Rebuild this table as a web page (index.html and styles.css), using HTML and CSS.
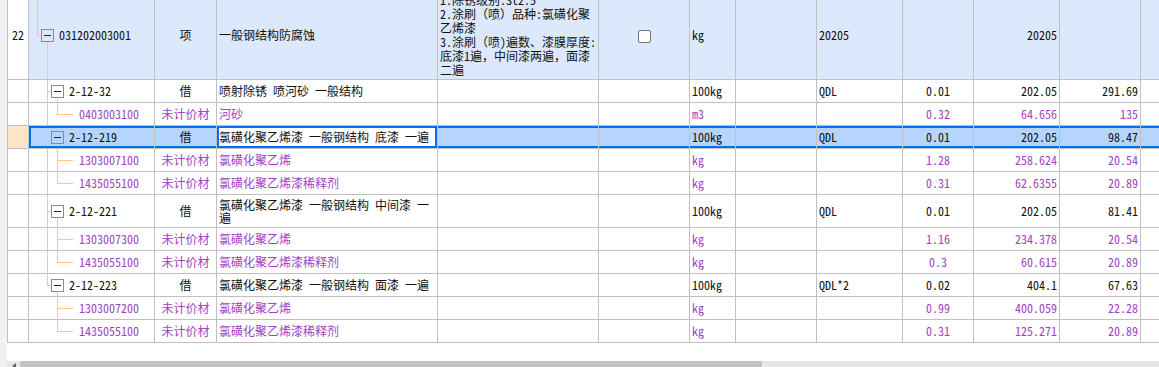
FILE: index.html
```html
<!DOCTYPE html>
<html lang="zh-CN">
<head>
<meta charset="utf-8">
<title>清单</title>
<link rel="stylesheet" href="styles.css">
</head>
<body>
<div class="frame">
  <div class="gutter"></div>
  <div class="main">
    <div class="grid-wrap">
      <table class="grid">
        <colgroup>
          <col class="c-no"><col class="c-code"><col class="c-type"><col class="c-name"><col class="c-feat"><col class="c-chk"><col class="c-unit"><col class="c-e1"><col class="c-expr"><col class="c-qty"><col class="c-price"><col class="c-sum"><col class="c-last">
        </colgroup>
        <tbody>
          <tr class="r-top">
            <td class="no">22</td>
            <td class="tree lv1"><span class="ln v x0 up"></span><span class="ln h h0"></span><span class="ln v x1 down"></span><span class="tog"></span><span>031202003001</span></td>
            <td class="ctr">项</td>
            <td>一般钢结构防腐蚀</td>
            <td class="wrap">1.除锈级别:St2.5<br>2.涂刷（喷）品种:氯磺化聚乙烯漆<br>3.涂刷（喷)遍数、漆膜厚度:底漆1遍，中间漆两遍，面漆二遍</td>
            <td class="ctr"><span class="chk"></span></td>
            <td>kg</td>
            <td></td>
            <td>20205</td>
            <td></td>
            <td class="num">20205</td>
            <td></td>
            <td></td>
          </tr>
          <tr class="r">
            <td class="no"></td>
            <td class="tree lv2"><span class="ln v x1 full"></span><span class="ln h h1"></span><span class="ln v x2 down"></span><span class="tog"></span><span>2-12-32</span></td>
            <td class="ctr">借</td>
            <td>喷射除锈 喷河砂 一般结构</td>
            <td></td><td></td>
            <td>100kg</td><td></td><td>QDL</td>
            <td class="ctr">0.01</td><td class="num">202.05</td><td class="num">291.69</td><td></td>
          </tr>
          <tr class="r p">
            <td class="no"></td>
            <td class="tree lv3"><span class="ln v x1 full"></span><span class="ln v x2 up"></span><span class="ln h h2"></span><span>0403003100</span></td>
            <td class="ctr">未计价材</td>
            <td>河砂</td>
            <td></td><td></td>
            <td>m3</td><td></td><td></td>
            <td class="ctr">0.32</td><td class="num">64.656</td><td class="num">135</td><td></td>
          </tr>
          <tr class="r sel">
            <td class="no"></td>
            <td class="tree lv2"><span class="tog"></span><span>2-12-219</span></td>
            <td class="ctr">借</td>
            <td class="act">氯磺化聚乙烯漆 一般钢结构 底漆 一遍</td>
            <td></td><td></td>
            <td>100kg</td><td></td><td>QDL</td>
            <td class="ctr">0.01</td><td class="num">202.05</td><td class="num">98.47</td><td class="end"></td>
          </tr>
          <tr class="r p">
            <td class="no"></td>
            <td class="tree lv3"><span class="ln v x1 full"></span><span class="ln v x2 full"></span><span class="ln h h2"></span><span>1303007100</span></td>
            <td class="ctr">未计价材</td>
            <td>氯磺化聚乙烯</td>
            <td></td><td></td>
            <td>kg</td><td></td><td></td>
            <td class="ctr">1.28</td><td class="num">258.624</td><td class="num">20.54</td><td></td>
          </tr>
          <tr class="r p">
            <td class="no"></td>
            <td class="tree lv3"><span class="ln v x1 full"></span><span class="ln v x2 up"></span><span class="ln h h2"></span><span>1435055100</span></td>
            <td class="ctr">未计价材</td>
            <td>氯磺化聚乙烯漆稀释剂</td>
            <td></td><td></td>
            <td>kg</td><td></td><td></td>
            <td class="ctr">0.31</td><td class="num">62.6355</td><td class="num">20.89</td><td></td>
          </tr>
          <tr class="r tall">
            <td class="no"></td>
            <td class="tree lv2"><span class="ln v x1 full"></span><span class="ln h h1"></span><span class="ln v x2 down"></span><span class="tog"></span><span>2-12-221</span></td>
            <td class="ctr">借</td>
            <td class="wrap">氯磺化聚乙烯漆 一般钢结构 中间漆 一遍</td>
            <td></td><td></td>
            <td>100kg</td><td></td><td>QDL</td>
            <td class="ctr">0.01</td><td class="num">202.05</td><td class="num">81.41</td><td></td>
          </tr>
          <tr class="r p">
            <td class="no"></td>
            <td class="tree lv3"><span class="ln v x1 full"></span><span class="ln v x2 full"></span><span class="ln h h2"></span><span>1303007300</span></td>
            <td class="ctr">未计价材</td>
            <td>氯磺化聚乙烯</td>
            <td></td><td></td>
            <td>kg</td><td></td><td></td>
            <td class="ctr">1.16</td><td class="num">234.378</td><td class="num">20.54</td><td></td>
          </tr>
          <tr class="r p">
            <td class="no"></td>
            <td class="tree lv3"><span class="ln v x1 full"></span><span class="ln v x2 up"></span><span class="ln h h2"></span><span>1435055100</span></td>
            <td class="ctr">未计价材</td>
            <td>氯磺化聚乙烯漆稀释剂</td>
            <td></td><td></td>
            <td>kg</td><td></td><td></td>
            <td class="ctr">0.3</td><td class="num">60.615</td><td class="num">20.89</td><td></td>
          </tr>
          <tr class="r">
            <td class="no"></td>
            <td class="tree lv2"><span class="ln v x1 up"></span><span class="ln h h1"></span><span class="ln v x2 down"></span><span class="tog"></span><span>2-12-223</span></td>
            <td class="ctr">借</td>
            <td>氯磺化聚乙烯漆 一般钢结构 面漆 一遍</td>
            <td></td><td></td>
            <td>100kg</td><td></td><td>QDL*2</td>
            <td class="ctr">0.02</td><td class="num">404.1</td><td class="num">67.63</td><td></td>
          </tr>
          <tr class="r p">
            <td class="no"></td>
            <td class="tree lv3"><span class="ln v x2 full"></span><span class="ln h h2"></span><span>1303007200</span></td>
            <td class="ctr">未计价材</td>
            <td>氯磺化聚乙烯</td>
            <td></td><td></td>
            <td>kg</td><td></td><td></td>
            <td class="ctr">0.99</td><td class="num">400.059</td><td class="num">22.28</td><td></td>
          </tr>
          <tr class="r p">
            <td class="no"></td>
            <td class="tree lv3"><span class="ln v x2 up"></span><span class="ln h h2"></span><span>1435055100</span></td>
            <td class="ctr">未计价材</td>
            <td>氯磺化聚乙烯漆稀释剂</td>
            <td></td><td></td>
            <td>kg</td><td></td><td></td>
            <td class="ctr">0.31</td><td class="num">125.271</td><td class="num">20.89</td><td></td>
          </tr>
        </tbody>
      </table>
    </div>
    <div class="hscroll">
      <span class="arrow"></span>
      <span class="thumb"></span>
    </div>
  </div>
</div>
</body>
</html>
```

FILE: styles.css
```css
html, body {
  margin: 0;
  padding: 0;
  background: #fff;
  overflow: hidden;
}
body {
  width: 1159px;
  height: 367px;
  font-family: "Noto Sans Mono CJK SC", "Noto Sans CJK SC", monospace;
  font-size: 12px;
  font-weight: 300;
  color: #111;
}
.frame {
  display: flex;
  height: 367px;
}
.gutter {
  width: 7px;
  flex: none;
  background: #f1f1f1;
}
.main {
  flex: 1;
  min-width: 0;
  display: flex;
  flex-direction: column;
  overflow: hidden;
}
.grid-wrap {
  flex: 1;
  overflow: hidden;
}
.grid {
  border-collapse: collapse;
  table-layout: fixed;
  width: 1194px;
  margin-top: -10px;
}
.c-no { width: 21px; }
.c-code { width: 126px; }
.c-type { width: 62px; }
.c-name { width: 221px; }
.c-feat { width: 161px; }
.c-chk { width: 91px; }
.c-unit { width: 46px; }
.c-e1 { width: 81px; }
.c-expr { width: 86px; }
.c-qty { width: 71px; }
.c-price { width: 86px; }
.c-sum { width: 81px; }
.c-last { width: 60px; }

.grid td {
  border: 1px solid #c0c0c0;
  padding: 0 2px;
  line-height: 14px;
  white-space: nowrap;
  overflow: hidden;
  vertical-align: middle;
  text-align: left;
}
.r { height: 23px; }
.r.tall { height: 33px; }
.r-top { height: 89px; }
.r-top td { background: #dce8fb; }
.r-top td.no { background: #fff; }

.grid td.no { text-align: center; padding: 0; }
.grid td.ctr { text-align: center; }
.grid td.num { text-align: right; }
.grid td.wrap {
  white-space: normal;
  line-height: 14px;
  word-break: break-all;
}
.r.tall td.wrap { line-height: 13.5px; }

.p td { color: #a33fc4; }

/* tree */
.grid td.tree {
  position: relative;
  padding: 0;
}
.grid td.lv1 { padding-left: 12px; }
.grid td.lv2 { padding-left: 22px; }
.grid td.lv3 { padding-left: 50px; }
.tog {
  display: inline-block;
  position: relative;
  width: 11px;
  height: 11px;
  border: 1px solid #8a8a8a;
  margin-right: 5px;
  vertical-align: -2px;
}
.tog::after {
  content: "";
  position: absolute;
  left: 2px;
  right: 2px;
  top: 5px;
  height: 1px;
  background: #222;
}
.ln {
  position: absolute;
  background: #fcc983;
}
.v { width: 1px; }
.x0 { left: 8px; }
.x1 { left: 18px; }
.x2 { left: 28px; }
.full { top: 0; bottom: 0; }
.up { top: 0; height: 50%; }
.down { top: calc(50% + 6px); bottom: 0; }
.h { height: 1px; top: 50%; }
.h0 { left: 8px; width: 4px; }
.h1 { left: 18px; width: 4px; }
.h2 { left: 28px; width: 16px; }

/* checkbox */
.chk {
  display: inline-block;
  width: 11px;
  height: 11px;
  border: 1px solid #777;
  border-radius: 2px;
  background: #fff;
  vertical-align: middle;
}

/* selection */
.sel td {
  background: #b5d5fe;
  box-shadow: inset 0 2px 0 #0a6cf0, inset 0 -2px 0 #0a6cf0;
}
.sel td.no {
  background: #fde6c8;
  box-shadow: none;
}
.sel td.tree {
  box-shadow: inset 2px 0 0 #0a6cf0, inset 0 2px 0 #0a6cf0, inset 0 -2px 0 #0a6cf0;
}
.sel td.act {
  background: #fff;
  box-shadow: inset 0 0 0 2px #0a6cf0;
}

/* scrollbar */
.hscroll {
  flex: none;
  height: 6px;
  background: #e6e6e6;
  display: flex;
  align-items: flex-start;
}
.arrow {
  width: 0;
  height: 0;
  margin: 2px 0 0 5px;
  border-right: 4px solid #666;
  border-top: 3px solid transparent;
  border-bottom: 3px solid transparent;
}
.thumb {
  margin-left: 4px;
  width: 742px;
  height: 6px;
  background: #c2c2c2;
  border-radius: 3px 0 0 0;
}
```
